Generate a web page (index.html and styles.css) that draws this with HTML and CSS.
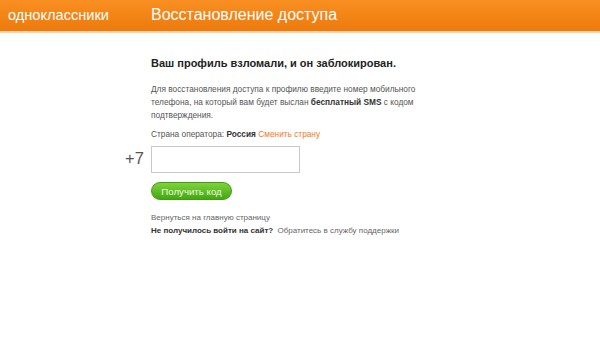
FILE: index.html
```html
<!DOCTYPE html>
<html lang="ru">
<head>
    <meta charset="UTF-8">
    <title>Восстановление доступа</title>
    <link rel="stylesheet" href="styles.css">
</head>
<body>
    <div class="topbar">
        <div class="logo">одноклассники</div>
        <div class="page-title">Восстановление доступа</div>
    </div>

    <div class="content">
        <h1>Ваш профиль взломали, и он заблокирован.</h1>
        <p class="intro">Для восстановления доступа к профилю введите номер мобильного<br>телефона, на который вам будет выслан <b>бесплатный SMS</b> с кодом<br>подтверждения.</p>
        <p class="country">Страна оператора: <b>Россия</b> <a href="#" class="orange">Сменить страну</a></p>

        <div class="phone-row">
            <span class="prefix">+7</span>
            <input type="text" class="phone">
        </div>

        <button class="btn-green">Получить код</button>

        <div class="links">
            <a href="#" class="gray">Вернуться на главную страницу</a>
            <div><b>Не получилось войти на сайт?</b> <a href="#" class="gray">Обратитесь в службу поддержки</a></div>
        </div>
    </div>
</body>
</html>
```

FILE: styles.css
```css
body {
    margin: 0;
    font-family: 'Liberation Sans', Arial, sans-serif;
    color: #333;
    background: #fff;
}
.topbar {
    height: 31px;
    background: linear-gradient(#f98f22, #ed7a0c);
    border-bottom: 2px solid #fbd3ad;
    display: flex;
    align-items: center;
    color: #fff;
}
.logo {
    width: 143px;
    padding-left: 8px;
    font-size: 14.6px;
    margin-top: -2px;
}
.page-title {
    font-size: 16px;
    margin-top: -2px;
}
.content {
    padding-left: 151px;
    padding-top: 23px;
}
h1 {
    font-size: 11px;
    line-height: 14px;
    color: #222;
    margin: 0 0 13px;
}
.intro {
    font-size: 8.3px;
    line-height: 13px;
    color: #555;
    white-space: nowrap;
    margin: 0 0 6px;
}
.intro b, .country b {
    color: #333;
}
.country {
    font-size: 8.3px;
    line-height: 13px;
    color: #555;
    margin: 0 0 5px;
}
a {
    text-decoration: none;
}
.orange {
    color: #f07a23;
}
.gray {
    color: #666;
}
.phone-row {
    position: relative;
}
.prefix {
    position: absolute;
    left: -26px;
    top: 3px;
    font-size: 16.5px;
    color: #555;
}
.phone {
    box-sizing: border-box;
    width: 149px;
    height: 27px;
    border: 1px solid #c9c9c9;
    padding: 0 2px;
    margin: 0;
    display: block;
}
.btn-green {
    display: block;
    margin-top: 9px;
    width: 81px;
    height: 18px;
    border: 1px solid #3f9e10;
    border-radius: 9px;
    background: linear-gradient(#7ed23d, #43a810);
    color: #eaf8e0;
    font-family: 'Liberation Sans', Arial, sans-serif;
    font-size: 9.7px;
    padding: 0;
}
.links {
    margin-top: 11px;
    font-size: 8px;
    line-height: 13px;
}
.links b {
    color: #333;
    margin-right: 2px;
}
```
